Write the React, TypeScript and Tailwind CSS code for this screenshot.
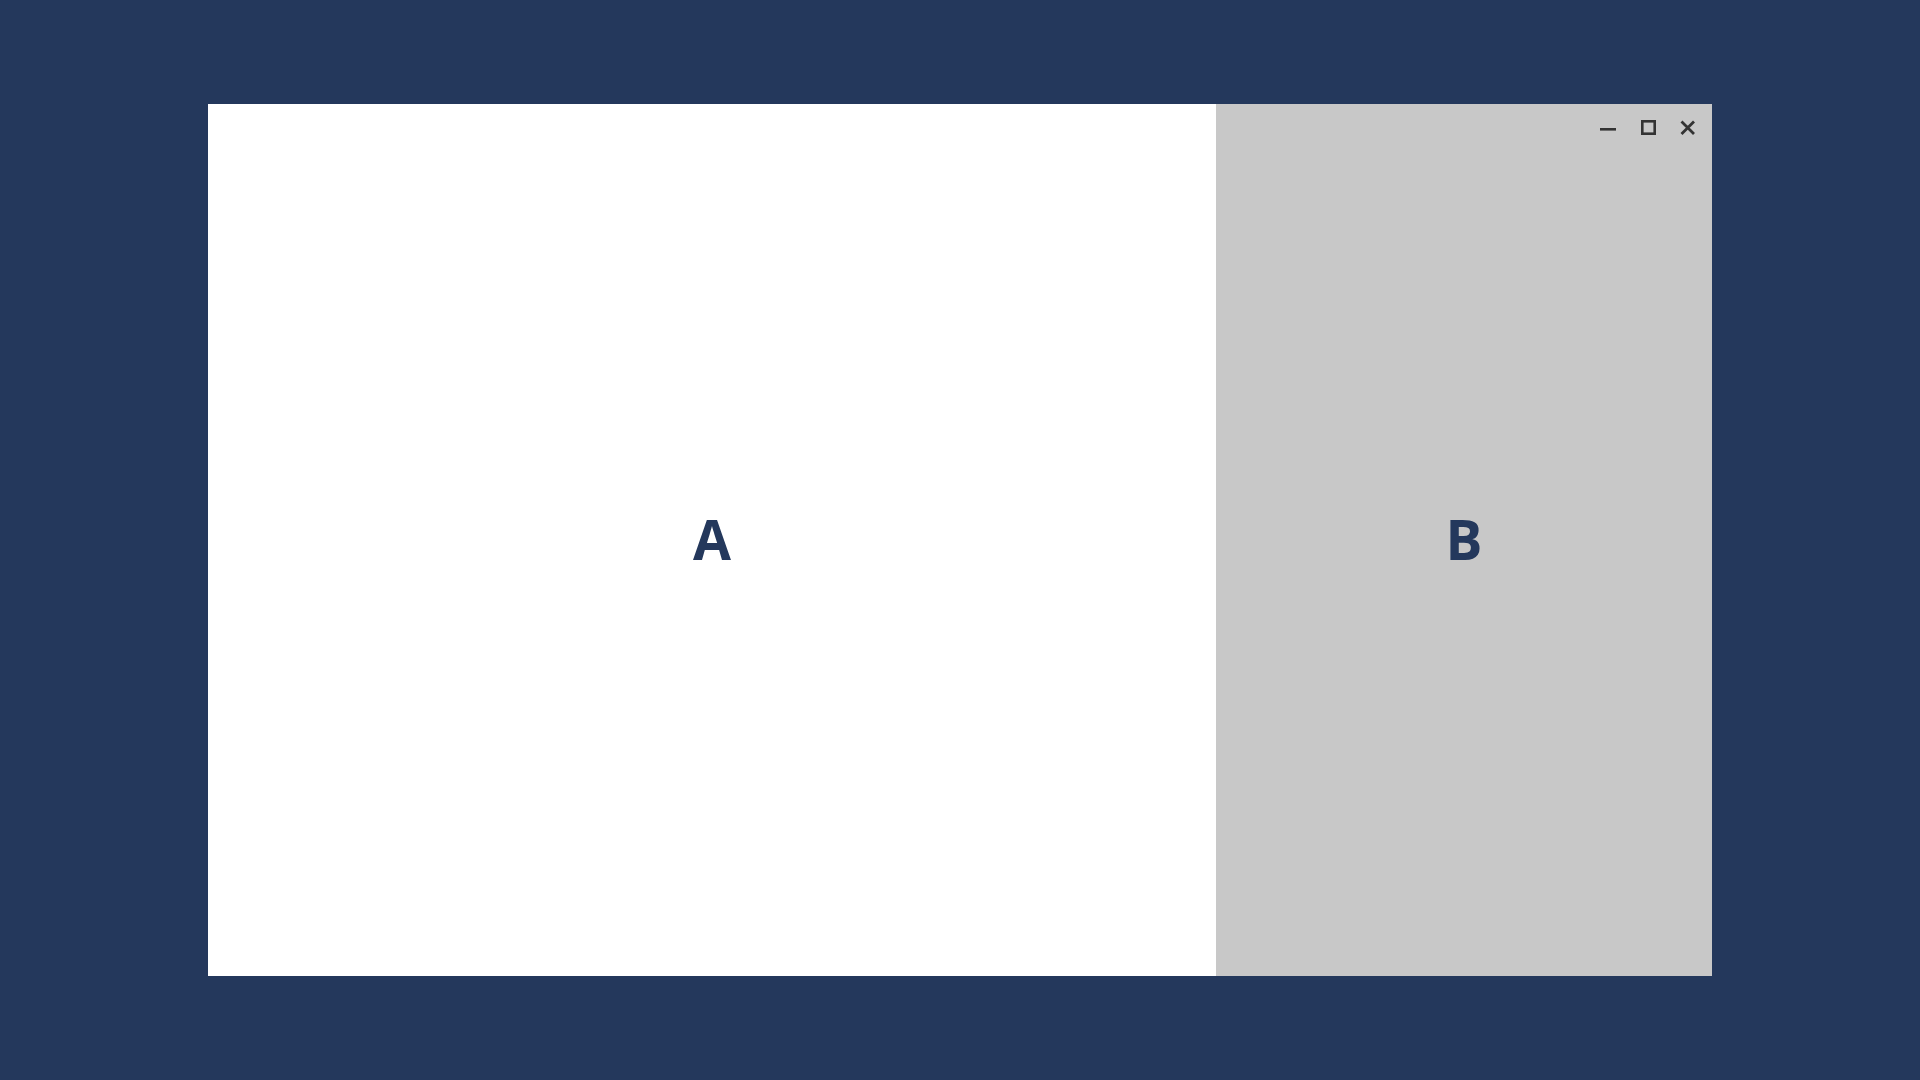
import React from "react";

export default function App() {
  return (
    <div className="w-[1920px] h-[1080px] bg-[#24385c] pt-[104px] pl-[208px]" style={{ fontFamily: '"Open Sans", sans-serif' }}>
      <div className="w-[1504px] h-[872px] flex">
        <div className="w-[1008px] h-full bg-white flex items-center justify-center">
          <span className="text-[55px] font-bold text-[#24385c] leading-none -mt-[3px]">A</span>
        </div>
        <div className="relative w-[496px] h-full bg-[#c8c8c8] flex items-center justify-center">
          <div className="absolute top-[16px] right-[16px] flex items-center gap-[24px]">
            <svg width="16" height="16" viewBox="0 0 16 16">
              <rect x="0" y="8" width="17" height="2.6" fill="#333" />
            </svg>
            <svg width="16" height="16" viewBox="0 0 16 16">
              <rect x="2.3" y="1.3" width="12.4" height="12.4" fill="none" stroke="#333" strokeWidth="2.6" />
            </svg>
            <svg width="16" height="16" viewBox="0 0 16 16">
              <path d="M1.5 1.5 L14 14 M14 1.5 L1.5 14" stroke="#333" strokeWidth="2.8" />
            </svg>
          </div>
          <span className="text-[55px] font-bold text-[#24385c] leading-none -mt-[3px]">B</span>
        </div>
      </div>
    </div>
  );
}
